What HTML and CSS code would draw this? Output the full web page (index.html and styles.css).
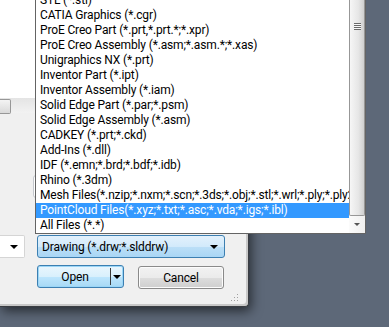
FILE: index.html
```html
<!DOCTYPE html>
<html lang="en">
<head>
  <meta charset="UTF-8" />
  <title>Open</title>
  <link rel="stylesheet" href="styles.css">
</head>
<body>
  <div class="dialog">
    <div class="pane"></div>
    <div class="hscroll"><div class="hthumb"></div></div>
    <div class="body">
      <div class="name-row"><div class="name-box"></div></div>
      <div class="type-row">
        <div class="file-combo"><span class="arrow"></span></div>
        <div class="type-combo">
          <span>Drawing (*.drw;*.slddrw)</span>
          <span class="arrow"></span>
        </div>
      </div>
      <div class="btn-row">
        <div class="btn btn-open">
          <span class="btn-label">Open</span>
          <span class="split"><span class="arrow"></span></span>
        </div>
        <div class="btn btn-cancel">Cancel</div>
      </div>
      <svg class="grip" width="8" height="8" viewBox="0 0 8 8">
        <rect x="6" y="0" width="1" height="1" fill="#a0a0a0"/>
        <rect x="3" y="3" width="1" height="1" fill="#a0a0a0"/>
        <rect x="6" y="3" width="1" height="1" fill="#a0a0a0"/>
        <rect x="0" y="6" width="1" height="1" fill="#a0a0a0"/>
        <rect x="3" y="6" width="1" height="1" fill="#a0a0a0"/>
        <rect x="6" y="6" width="1" height="1" fill="#a0a0a0"/>
      </svg>
    </div>
  </div>

  <div class="droplist">
    <ul class="items">
      <li>STL (*.stl)</li>
      <li>CATIA Graphics (*.cgr)</li>
      <li>ProE Creo Part (*.prt,*.prt.*;*.xpr)</li>
      <li>ProE Creo Assembly (*.asm;*.asm.*;*.xas)</li>
      <li>Unigraphics NX (*.prt)</li>
      <li>Inventor Part (*.ipt)</li>
      <li>Inventor Assembly (*.iam)</li>
      <li>Solid Edge Part (*.par;*.psm)</li>
      <li>Solid Edge Assembly (*.asm)</li>
      <li>CADKEY (*.prt;*.ckd)</li>
      <li>Add-Ins (*.dll)</li>
      <li>IDF (*.emn;*.brd;*.bdf;*.idb)</li>
      <li>Rhino (*.3dm)</li>
      <li>Mesh Files(*.nzip;*.nxm;*.scn;*.3ds;*.obj;*.stl;*.wrl;*.ply;*.ply2)</li>
      <li class="selected">PointCloud Files(*.xyz;*.txt;*.asc;*.vda;*.igs;*.ibl)</li>
      <li>All Files (*.*)</li>
    </ul>
    <div class="vscroll">
      <div class="vthumb"><span class="grip-lines"></span></div>
      <div class="vdown"><span class="arrow"></span></div>
    </div>
  </div>
</body>
</html>
```

FILE: styles.css
```css
body {
  margin: 0;
  width: 389px;
  height: 327px;
  overflow: hidden;
  background: #5d6878;
  font-family: Roboto, "Noto Sans", sans-serif;
  font-size: 12px;
  letter-spacing: -0.15px;
  color: #000;
  position: relative;
}

.dialog {
  width: 248px;
  height: 306px;
  background: #f0f0f0;
  border-right: 1px solid #3a3d42;
  border-bottom: 1px solid #3a3d42;
  border-bottom-right-radius: 4px;
  box-shadow: inset -2px -2px 0 #c8c8c8, 2px 4px 12px rgba(0, 0, 0, 0.6);
  display: flex;
  flex-direction: column;
}

.pane {
  height: 98px;
  background: #fff;
}

.hscroll {
  height: 15px;
  background: linear-gradient(#e4e4e4, #f2f2f2);
  display: flex;
}
.hthumb {
  width: 10px;
  height: 13px;
  margin-top: 1px;
  background: linear-gradient(#f4f4f4, #d9d9d9);
  border: 1px solid #979797;
  border-left: none;
  border-radius: 0 2px 2px 0;
}

.body {
  flex: 1;
  display: flex;
  flex-direction: column;
  position: relative;
}

.name-row {
  margin-top: 62px;
  height: 23px;
  padding-left: 33px;
}
.name-box {
  width: 200px;
  height: 21px;
  background: #fff;
  border: 1px solid #c5c8cd;
  border-radius: 3px;
}

.type-row {
  margin-top: 37px;
  height: 23px;
  display: flex;
}
.file-combo {
  width: 18px;
  height: 21px;
  background: #fff;
  border: 1px solid #d5d5d5;
  border-left: none;
  border-radius: 0 2px 2px 0;
  display: flex;
  align-items: center;
  justify-content: flex-end;
  padding-right: 6px;
}
.type-combo {
  margin-left: 12px;
  width: 176px;
  height: 21px;
  padding: 0 6px 0 4px;
  border: 1px solid #3c7fb1;
  border-radius: 3px;
  background: linear-gradient(#e3f1fc 0%, #d2eafb 50%, #bcdff7 51%, #a9d6f5 100%);
  display: flex;
  align-items: center;
  justify-content: space-between;
}

.arrow {
  width: 0;
  height: 0;
  border-left: 4px solid transparent;
  border-right: 4px solid transparent;
  border-top: 4px solid #000;
}

.btn-row {
  margin-top: 7px;
  display: flex;
  gap: 14px;
  padding-left: 37px;
}
.btn {
  height: 21px;
  border-radius: 3px;
  display: flex;
  align-items: center;
}
.btn-open {
  width: 85px;
  border: 1px solid #3c7fb1;
  background: linear-gradient(#eaf6fd 0%, #d9f0fc 50%, #bee6fd 51%, #a7d9f5 100%);
  box-shadow: inset 0 0 0 1px #9bd6f7;
}
.btn-label {
  flex: 1;
  text-align: center;
  padding-left: 2px;
}
.split {
  width: 12px;
  height: 17px;
  border-left: 1px solid #3c3c3c;
  display: flex;
  align-items: center;
  justify-content: center;
}
.btn-cancel {
  width: 84px;
  margin-top: 1px;
  justify-content: center;
  border: 1px solid #8a8a8a;
  background: linear-gradient(#f2f2f2 0%, #ebebeb 50%, #dddddd 51%, #cfcfcf 100%);
  box-shadow: inset 0 0 0 1px #fcfcfc;
}

.grip {
  position: absolute;
  left: 231px;
  bottom: 4px;
}

/* popup list over the dialog */
.droplist {
  position: absolute;
  left: 35px;
  top: -8px;
  width: 329px;
  height: 240px;
  background: #fff;
  border: 1px solid #646464;
  display: flex;
}
.items {
  list-style: none;
  margin: 0;
  padding: 0;
  flex: 1;
  overflow: hidden;
}
.items li {
  height: 15px;
  line-height: 15px;
  padding-left: 4px;
  white-space: nowrap;
  overflow: hidden;
}
.items li.selected {
  background: #3399ff;
  color: #fff;
}

.vscroll {
  width: 16px;
  display: flex;
  flex-direction: column;
  background: #ececec;
}
.vthumb {
  flex: 1;
  background: linear-gradient(to right, #f6f6f6, #e6e6e6 60%, #cfcfcf);
  border: 1px solid #979797;
  border-top: none;
  border-radius: 0 0 2px 2px;
  display: flex;
  justify-content: center;
  padding-top: 30px;
}
.grip-lines {
  width: 7px;
  height: 7px;
  background: repeating-linear-gradient(#6a6a6a 0 1px, #f8f8f8 1px 2px);
}
.vdown {
  height: 17px;
  display: flex;
  align-items: center;
  justify-content: center;
  background: linear-gradient(to right, #fbfbfb, #efefef);
}
.vdown .arrow {
  border-top-color: #555;
  border-left-width: 3px;
  border-right-width: 3px;
  border-top-width: 3px;
}
```
